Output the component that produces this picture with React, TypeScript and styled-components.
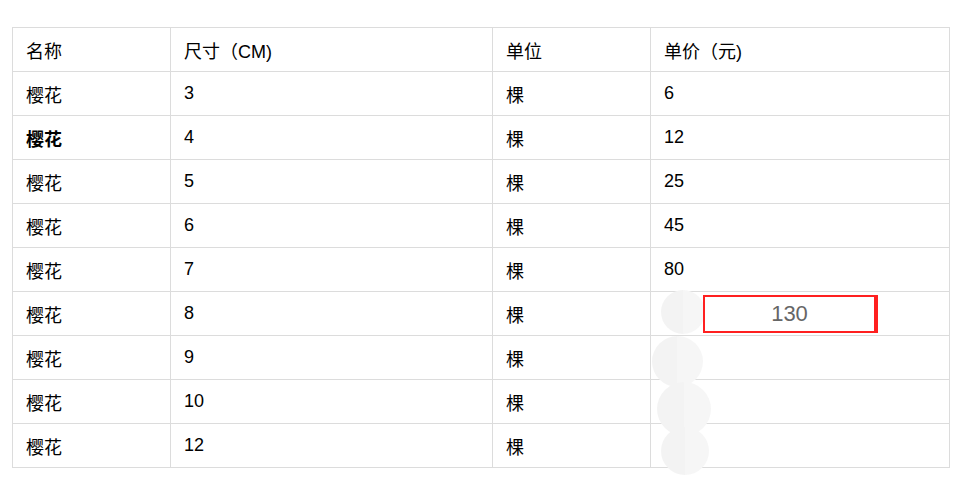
import * as React from 'react'
import styled, { createGlobalStyle } from 'styled-components'

const GlobalStyle = createGlobalStyle`
  html, body {
    margin: 0;
    padding: 0;
    background: #fff;
  }
  body {
    font-family: "Liberation Sans", Arial, "Noto Sans CJK SC", sans-serif;
    color: #000;
  }
`

const rows = [
  { name: '樱花', size: '3', unit: '棵', price: '6' },
  { name: '樱花', size: '4', unit: '棵', price: '12', bold: true },
  { name: '樱花', size: '5', unit: '棵', price: '25' },
  { name: '樱花', size: '6', unit: '棵', price: '45' },
  { name: '樱花', size: '7', unit: '棵', price: '80' },
  { name: '樱花', size: '8', unit: '棵', price: '', editing: '130' },
  { name: '樱花', size: '9', unit: '棵', price: '' },
  { name: '樱花', size: '10', unit: '棵', price: '' },
  { name: '樱花', size: '12', unit: '棵', price: '' },
]

// blurred blobs left over the price column
const blobs = [
  { left: 661, top: 290, size: 44 },
  { left: 652, top: 336, size: 51 },
  { left: 657, top: 382, size: 54 },
  { left: 661, top: 427, size: 48 },
]

const Page = styled.div`
  position: relative;
  padding: 27px 0 0 12px;
  width: 968px;
  height: 486px;
  box-sizing: border-box;
`

const Table = styled.table`
  border-collapse: collapse;
  table-layout: fixed;
  width: 937px;
`

const Cell = styled.td<{ $bold?: boolean }>`
  border: 1px solid #dcdcdc;
  height: 44px;
  padding: 0 0 0 13px;
  font-size: 18px;
  font-weight: ${(p) => (p.$bold ? 700 : 400)};
  text-align: left;
  vertical-align: middle;
  box-sizing: border-box;
  position: relative;
`

const HeadCell = styled(Cell).attrs({ as: 'th' })``

const EditBox = styled.div`
  position: absolute;
  left: 52px;
  top: 3px;
  width: 175px;
  height: 38px;
  box-sizing: border-box;
  border: 2px solid #ff2020;
  border-right-width: 4px;
  background: #fff;
  color: #666;
  font-size: 22px;
  display: flex;
  align-items: center;
  justify-content: center;
  z-index: 2;
`

const Blob = styled.div`
  position: absolute;
  border-radius: 50%;
  background: linear-gradient(90deg, #f3f3f3 50%, #f6f6f6 50%);
  z-index: 1;
`

export default function App() {
  return (
    <Page>
      <GlobalStyle />
      <Table>
        <colgroup>
          <col style={{ width: 158 }} />
          <col style={{ width: 322 }} />
          <col style={{ width: 158 }} />
          <col style={{ width: 299 }} />
        </colgroup>
        <thead>
          <tr>
            <HeadCell>名称</HeadCell>
            <HeadCell>尺寸（CM)</HeadCell>
            <HeadCell>单位</HeadCell>
            <HeadCell>单价（元)</HeadCell>
          </tr>
        </thead>
        <tbody>
          {rows.map((r, i) => (
            <tr key={i}>
              <Cell $bold={r.bold}>{r.name}</Cell>
              <Cell>{r.size}</Cell>
              <Cell>{r.unit}</Cell>
              <Cell>
                {r.price}
                {r.editing && <EditBox>{r.editing}</EditBox>}
              </Cell>
            </tr>
          ))}
        </tbody>
      </Table>
      {blobs.map((b, i) => (
        <Blob
          key={i}
          style={{ left: b.left, top: b.top, width: b.size, height: b.size }}
        />
      ))}
    </Page>
  )
}
